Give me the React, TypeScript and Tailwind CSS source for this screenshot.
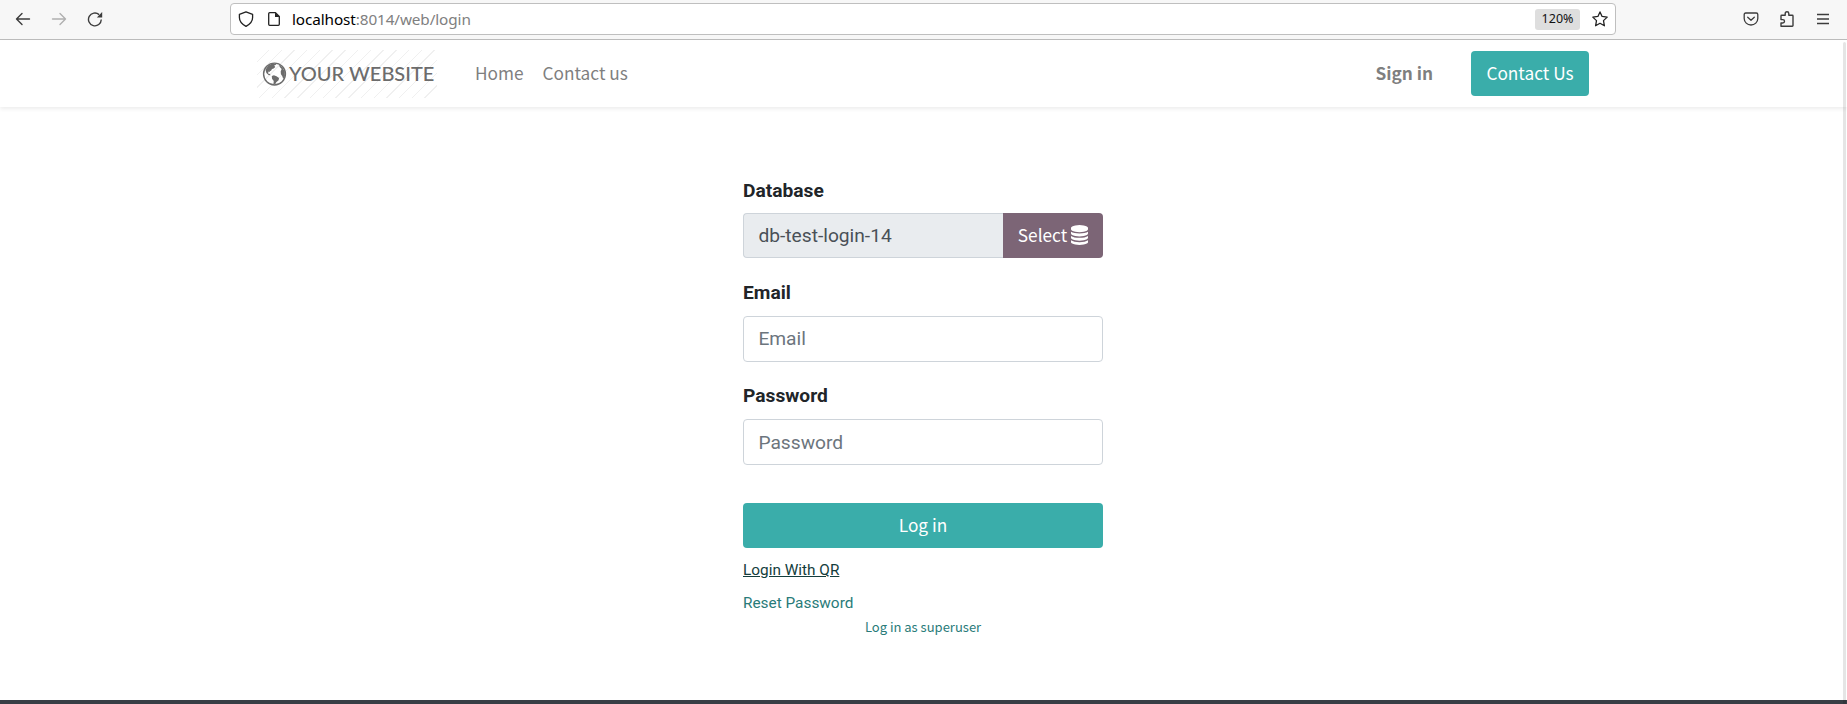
import React from "react";

const sourceSans = "font-['Noto_Sans_CJK_SC',sans-serif]";

function ArrowIcon({ className }: { className: string }) {
  return (
    <svg viewBox="0 0 16 16" className={className} fill="none" stroke="currentColor" strokeWidth="1.4" strokeLinecap="round" strokeLinejoin="round">
      <path d="M14.500 8H1.500M7 2.500 1.500 8 7 13.500" />
    </svg>
  );
}

function Toolbar() {
  return (
    <header className="flex h-10 shrink-0 items-center border-b border-[#bdbdbd] bg-[#f7f7f7] pb-px text-[#3c3c3c]">
      <div className="flex w-[230px] shrink-0 items-center pl-[15px]">
        <ArrowIcon className="h-4 w-4" />
        <ArrowIcon className="ml-5 h-4 w-4 rotate-180 text-[#b0b0b0]" />
        <svg viewBox="0 0 16 16" className="ml-5 h-4 w-4" fill="none" stroke="currentColor" strokeWidth="1.4">
          <path d="M14.300 8.600a6.400 6.400 0 1 1-2.200-5" />
          <path d="M15.200 1v5.400H9.800z" fill="currentColor" stroke="none" />
        </svg>
      </div>
      <div className="flex h-8 w-[1386px] shrink-0 items-center rounded-[4px] border border-[#bfbfbf] bg-white pl-[7px] pr-[7px] text-[#222]">
        <svg viewBox="0 0 16 16" className="h-4 w-4" fill="none" stroke="currentColor" strokeWidth="1.3" strokeLinejoin="round">
          <path d="M8 .8 14.600 3.300V6.500C14.600 11 11.500 13.500 8 15.300 4.500 13.500 1.400 11 1.400 6.500V3.300Z" />
        </svg>
        <svg viewBox="0 0 12 14" className="ml-[14px] h-[14px] w-3" fill="none" stroke="currentColor" strokeWidth="1.3" strokeLinejoin="round">
          <path d="M1.700.7H7.500L11.300 4.500V12.300q0 1-1 1H1.700q-1 0-1-1V1.700q0-1 1-1Z" />
          <path d="M7 .5V5h4.500z" fill="currentColor" stroke="none" />
        </svg>
        <span className="ml-3 font-['Noto_Sans',sans-serif] text-[15.300px] leading-5 tracking-[-0.1px] text-[#808080]">
          <span className="text-black">localhost</span>:8014/web/login
        </span>
        <span className="ml-auto flex h-[21px] w-[45px] items-center justify-center rounded-[3px] bg-[#dedede] pt-px font-['Noto_Sans',sans-serif] text-[12.500px] text-[#111]">120%</span>
        <svg viewBox="0 0 16 16" className="ml-3 h-4 w-4" fill="none" stroke="currentColor" strokeWidth="1.3" strokeLinejoin="round">
          <path d="m8 .9 2.100 4.500 5.100.7-3.700 3.500.9 5.200L8 12.300l-4.400 2.500.9-5.200L.8 6.100l5.100-.7Z" />
        </svg>
      </div>
      <div className="ml-auto flex items-center gap-5 pr-[16px]">
        <svg viewBox="0 0 16 16" className="h-4 w-4" fill="none" stroke="currentColor" strokeWidth="1.3" strokeLinecap="round" strokeLinejoin="round">
          <path d="M2.700 2h10.600q1.500 0 1.500 1.500V7.500a6.800 6.500 0 0 1-13.600 0V3.500Q1.200 2 2.700 2ZM4.700 6.300 8 9.300l3.300-3" />
        </svg>
        <svg viewBox="0 0 16 16" className="h-4 w-4" fill="none" stroke="currentColor" strokeWidth="1.4" strokeLinejoin="round">
          <path d="M2 15.200V12H3.800a1.700 1.700 0 0 0 0-3.400H2V5q0-.7.700-.7H6.200V2.500a1.800 1.800 0 0 1 3.600 0V4.300h3.500q.7 0 .7.700v9.500q0 .7-.7.700Z" />
        </svg>
        <svg viewBox="0 0 16 16" className="h-4 w-4" fill="none" stroke="currentColor" strokeWidth="1.300">
          <path d="M2 3.500h12M2 8h12M2 12.500h12" />
        </svg>
      </div>
    </header>
  );
}

function Logo() {
  return (
    <div className="flex h-12 w-[180px] shrink-0 items-center bg-[repeating-linear-gradient(135deg,#fff_0px,#fff_8px,#f0f0f0_8px,#f0f0f0_9px)] pl-[5px] text-[#6c6c6c]">
      <svg viewBox="0 0 496 512" className="h-6 w-[25px] shrink-0" fill="currentColor">
        <path fillRule="evenodd" d="M248 8a248 248 0 1 0 0 496 248 248 0 0 0 0-496Zm0 30a218 218 0 1 1 0 436 218 218 0 0 1 0-436Z" />
        <path d="M55 165 110 80 190 35 270 35 285 60 240 75 265 105 230 140 195 150 170 190 145 185 155 215 120 205 110 245 150 255 165 285 120 275 75 235Z" />
        <path d="M190 300 235 285 290 305 345 340 335 390 285 430 262 480 225 475 232 405 195 355Z" />
        <path d="m345 60 70 50 50 90 5 100-35 65-25-70-25-35-5-60 20-50-40-45Z" />
      </svg>
      <span className="ml-[2px] whitespace-nowrap pb-0.5 font-['Lato',sans-serif] text-[20px] font-medium leading-6">YOUR WEBSITE</span>
    </div>
  );
}

function Navbar() {
  return (
    <nav className={`flex h-[67px] shrink-0 items-center pl-[257px] shadow-[0_2px_4px_rgba(0,0,0,0.075)] text-[17.250px] text-[#7f7f7f] ${sourceSans}`}>
      <Logo />
      <a className="ml-[38px] pb-0.5">Home</a>
      <a className="ml-[19px] pb-0.5">Contact us</a>
      <a className="ml-auto pb-0.5 font-bold">Sign in</a>
      <button className="ml-[38px] mr-[258px] h-[45px] w-[118px] rounded-[4px] bg-[#3aadaa] pb-0.5 text-white">Contact Us</button>
    </nav>
  );
}

function Field({ label, className, inputClassName }: { label: string; className: string; inputClassName: string }) {
  return (
    <label className={`block ${className}`}>
      <span className="block font-bold leading-[29px]">{label}</span>
      <input placeholder={label} className={`mt-[9px] block h-[46px] w-full rounded-[4px] border border-[#ced4da] px-[14.400px] placeholder:text-[#6c757d] ${inputClassName}`} />
    </label>
  );
}

function LoginForm() {
  return (
    <main className="ml-[743px] flex w-[360px] flex-1 flex-col pt-[69px] font-['Roboto',sans-serif] text-[19.200px] text-[#212529]">
      <span className="font-bold leading-[29px]">Database</span>
      <div className="mt-2 flex h-[45px] shrink-0">
        <div className="flex flex-1 items-center rounded-l-[4px] border border-r-0 border-[#ced4da] bg-[#e9ecef] pl-[14.400px] pt-px text-[#495057]">db-test-login-14</div>
        <button className={`flex w-[100px] items-center justify-center gap-1 rounded-r-[4px] bg-[#7c6576] text-[17.250px] text-white ${sourceSans}`}>
          <span className="pb-0.5">Select</span>
          <svg viewBox="0 0 1536 1792" className="mb-px h-[20px] w-[17px]" fill="currentColor" preserveAspectRatio="none">
            <path d="M768 768q237 0 443-43t325-127v170q0 69-103 128t-280 93.500-385 34.500-385-34.500-280-93.500-103-128v-170q119 84 325 127t443 43zm0 768q237 0 443-43t325-127v170q0 69-103 128t-280 93.500-385 34.500-385-34.500-280-93.500-103-128v-170q119 84 325 127t443 43zm0-384q237 0 443-43t325-127v170q0 69-103 128t-280 93.500-385 34.500-385-34.500-280-93.500-103-128v-170q119 84 325 127t443 43zm0-1152q208 0 385 34.500t280 93.500 103 128v128q0 69-103 128t-280 93.500-385 34.500-385-34.500-280-93.500-103-128v-128q0-69 103-128t280-93.500 385-34.500z" />
          </svg>
        </button>
      </div>
      <Field label="Email" className="mt-5" inputClassName="pb-px" />
      <Field label="Password" className="mt-[19px]" inputClassName="pt-px" />
      <button className={`mt-[38px] h-[45px] shrink-0 rounded-[4px] bg-[#3aadaa] pb-0.5 text-[17.250px] text-white ${sourceSans}`}>Log in</button>
      <a className="mt-[11px] text-[15.360px] leading-[23px] text-[#143d3c] underline">Login With QR</a>
      <a className="mt-[10px] text-[15.360px] leading-[23px] text-[#297b79]">Reset Password</a>
      <a className={`text-center text-[13px] leading-[23px] text-[#297b79] ${sourceSans}`}>Log in as superuser</a>
    </main>
  );
}

export default function App() {
  return (
    <div className="relative flex h-[704px] w-[1847px] flex-col overflow-hidden bg-white">
      <Toolbar />
      <Navbar />
      <LoginForm />
      <footer className="h-1 shrink-0 bg-[#383e45]" />
      <div className="absolute right-px top-[42px] h-[662px] w-[3px] rounded-t bg-black/10" />
    </div>
  );
}
